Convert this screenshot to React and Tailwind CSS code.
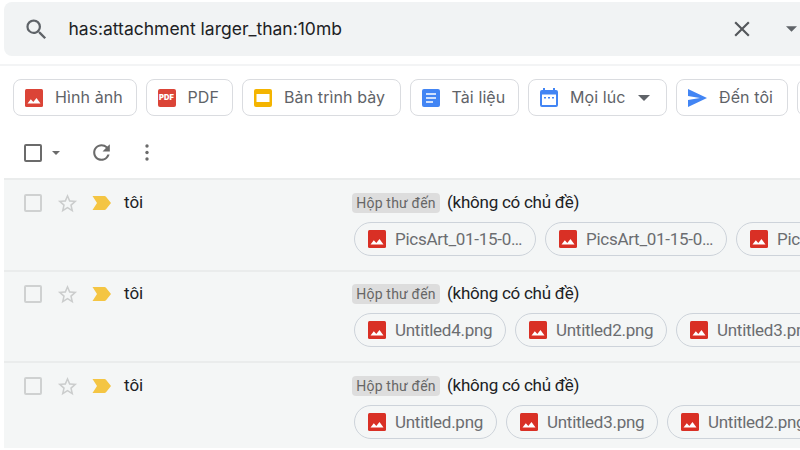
import { MdSearch, MdClose, MdRefresh, MdStarBorder } from "react-icons/md";

const ImageIcon = ({ color }) => (
  <svg viewBox="0 0 18 18" className="h-[18px] w-[18px] shrink-0">
    <rect width="18" height="18" rx="1.5" fill={color} />
    <path d="M2.500 14.500l3.300-4.200 2.500 2.700 3.200-4 4 5.500z" fill="#fff" />
  </svg>
);

const PdfIcon = () => (
  <span className="flex h-[18px] w-[18px] items-center justify-center rounded-[2px] bg-[#db4437] text-[7.5px] leading-none font-black text-white">
    PDF
  </span>
);

const SlidesIcon = () => (
  <svg viewBox="0 0 18 18" className="h-[18px] w-[18px] shrink-0">
    <rect width="18" height="18" rx="2" fill="#f4b400" />
    <rect x="2.5" y="5" width="13" height="8" fill="#fff" />
  </svg>
);

const DocIcon = () => (
  <svg viewBox="0 0 18 18" className="h-[18px] w-[18px] shrink-0">
    <rect width="18" height="18" rx="2" fill="#4285f4" />
    <path d="M4 4.200h10v1.600H4zM4 8.200h10v1.600H4zM4 12.200h7v1.600H4z" fill="#fff" />
  </svg>
);

const CalendarIcon = () => (
  <svg viewBox="0 0 18 19" className="h-[19px] w-[18px] shrink-0">
    <path
      d="M3 0h2v2h8V0h2v2h1a2 2 0 0 1 2 2v13a2 2 0 0 1-2 2H2a2 2 0 0 1-2-2V4a2 2 0 0 1 2-2h1zM2 6.500v10.500h14V6.500z"
      fill="#4285f4"
      fillRule="evenodd"
    />
    <path d="M4 9h2v1.600H4zM8 9h2v1.600H8zM12 9h2v1.600h-2z" fill="#4285f4" />
  </svg>
);

const SendIcon = () => (
  <svg viewBox="0 0 19 18" className="h-[18px] w-[19px] shrink-0">
    <path d="M0 0l19 9-19 9v-7l12-2-12-2z" fill="#4285f4" />
  </svg>
);

const MoreIcon = () => (
  <svg viewBox="0 0 4 17" className="h-[17px] w-[4px]">
    <circle cx="2" cy="2" r="1.7" fill="currentColor" />
    <circle cx="2" cy="8.5" r="1.7" fill="currentColor" />
    <circle cx="2" cy="15" r="1.7" fill="currentColor" />
  </svg>
);

const Caret = ({ className }) => (
  <svg viewBox="0 0 12 6" className={className}>
    <path d="M0 0h12L6 6z" fill="currentColor" />
  </svg>
);

const ImportantIcon = () => (
  <svg viewBox="0 0 19 14" className="h-[14px] w-[19px]">
    <path d="M.5 0h12a2 2 0 0 1 1.500.8L19 7l-5 6.200a2 2 0 0 1-1.500.8H.5l4.500-7z" fill="#f4c543" />
  </svg>
);

const filters = [
  { label: "Hình ảnh", icon: <ImageIcon color="#db4437" />, width: "w-[123.5px]" },
  { label: "PDF", icon: <PdfIcon />, width: "w-[87.5px]" },
  { label: "Bản trình bày", icon: <SlidesIcon />, width: "w-[158.5px]" },
  { label: "Tài liệu", icon: <DocIcon />, width: "w-[109.5px]" },
  { label: "Mọi lúc", icon: <CalendarIcon />, width: "w-[139px]", caret: true },
  { label: "Đến tôi", icon: <SendIcon />, width: "w-[112px]" },
  { label: "", icon: null, width: "w-[112px]" },
];

const mails = [
  {
    height: "h-[92px]",
    offset: "pt-[13px]",
    gap: "mt-[9px]",
    files: [
      { name: "PicsArt_01-15-0…", width: "w-[182px]" },
      { name: "PicsArt_01-15-0…", width: "w-[182px]" },
      { name: "PicsArt_01-15-0…", width: "w-[182px]" },
    ],
  },
  {
    height: "h-[91px]",
    offset: "pt-[12px]",
    gap: "mt-[9px]",
    files: [
      { name: "Untitled4.png", width: "w-[152px]" },
      { name: "Untitled2.png", width: "w-[152px]" },
      { name: "Untitled3.png", width: "w-[152px]" },
    ],
  },
  {
    height: "h-[87px]",
    offset: "pt-[13px]",
    gap: "mt-[9px]",
    files: [
      { name: "Untitled.png", width: "w-[143px]" },
      { name: "Untitled3.png", width: "w-[152px]" },
      { name: "Untitled2.png", width: "w-[152px]" },
    ],
  },
];

const SearchBar = () => (
  <div className="ml-1 flex h-[54px] items-center rounded-l-lg bg-[#f1f3f4] pl-[19px] font-[Inter,sans-serif]">
    <MdSearch className="h-[27px] w-[27px] text-[#5f6368]" />
    <span className="ml-[18.5px] grow pt-[1px] text-[17.5px] text-[#202124]">
      has:attachment larger_than:10mb
    </span>
    <MdClose className="h-[26px] w-[26px] text-[#54575b]" />
    <Caret className="mr-[3px] ml-[31px] h-[6px] w-[11px] text-[#5f6368]" />
  </div>
);

const FilterChips = () => (
  <div className="mt-[8px] flex h-[63px] gap-[9px] border-t-2 border-[#f3f4f5] pt-[13px] pl-[13px]">
    {filters.map((filter, index) => (
      <div
        key={index}
        className={`flex h-[37px] shrink-0 items-center rounded-lg border border-[#dadce0] bg-white pl-[11px] font-[Inter,sans-serif] text-[16px] tracking-[0.1px] whitespace-nowrap text-[#5f6368] ${filter.width}`}
      >
        {filter.icon}
        <span className="ml-[12px] pb-[1px]">{filter.label}</span>
        {filter.caret && <Caret className="ml-[12px] h-[6px] w-[12px]" />}
      </div>
    ))}
  </div>
);

const Toolbar = () => (
  <div className="flex h-[51px] items-center pl-6 text-[#6b6b6b]">
    <div className="h-[18px] w-[18px] rounded-[2px] border-2 border-[#6b6b6b]" />
    <Caret className="ml-[10px] h-[4px] w-[8px]" />
    <MdRefresh className="ml-[29px] h-[25px] w-[25px]" />
    <span className="ml-[31px]">
      <MoreIcon />
    </span>
  </div>
);

const MailRow = ({ mail }) => (
  <div className={`flex shrink-0 border-t-2 border-[#eaecec] bg-[#f4f6f6] pl-5 ${mail.height} ${mail.offset}`}>
    <div className="flex h-[20px] w-[328px] shrink-0 items-center">
      <div className="h-[18px] w-[18px] rounded-[2px] border-2 border-[#cfd1d1]" />
      <MdStarBorder className="ml-[14px] h-[23px] w-[23px] text-[#cbcdcd]" />
      <span className="ml-[12.5px]">
        <ImportantIcon />
      </span>
      <span className="ml-[13.5px] text-[17px] text-[#202124]">tôi</span>
    </div>
    <div className="flex flex-col">
      <div className="flex h-[20px] items-center">
        <span className="flex h-[20px] w-[88px] items-center justify-center rounded bg-[#dddddd] text-[14px] tracking-[0.2px] text-[#666]">
          Hộp thư đến
        </span>
        <span className="ml-[7px] text-[17px] tracking-[-0.25px] whitespace-nowrap text-[#202124]">
          (không có chủ đề)
        </span>
      </div>
      <div className={`ml-[2px] flex gap-[9px] ${mail.gap}`}>
        {mail.files.map((file, index) => (
          <div
            key={index}
            className={`flex h-[34px] shrink-0 items-center rounded-full border border-[#cdd3da] pl-[13px] text-[17px] tracking-[-0.28px] whitespace-nowrap text-[#6b6d70] ${file.width}`}
          >
            <ImageIcon color="#d93025" />
            <span className="ml-[9px] pt-[2px]">{file.name}</span>
          </div>
        ))}
      </div>
    </div>
  </div>
);

const App = () => {
  return (
    <div className="h-[450px] w-[800px] overflow-hidden bg-white pt-[2px] font-[Roboto,sans-serif]">
      <SearchBar />
      <FilterChips />
      <Toolbar />
      <div className="ml-1 overflow-hidden">
        {mails.map((mail, index) => (
          <MailRow key={index} mail={mail} />
        ))}
      </div>
    </div>
  );
};

export default App;
